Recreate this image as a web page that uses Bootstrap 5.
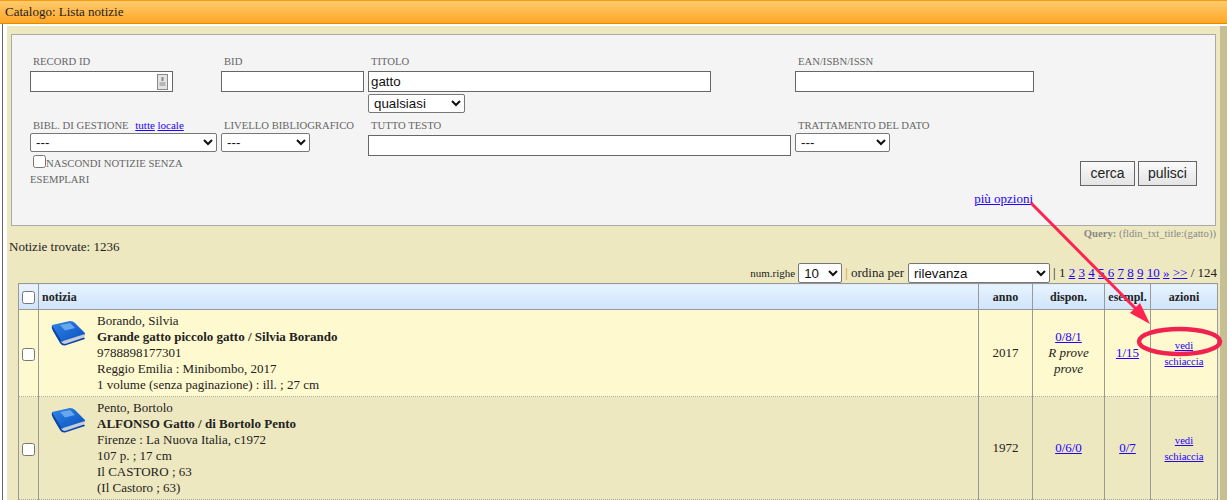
<!DOCTYPE html>
<html lang="it">
<head>
    <meta charset="UTF-8">
    <meta name="viewport" content="width=device-width, initial-scale=1.0">
    <title>Catalogo: Lista notizie</title>
    <link href="https://cdn.jsdelivr.net/npm/bootstrap@5.3.2/dist/css/bootstrap.min.css" rel="stylesheet">
    <style>
        html, body { height: 500px; overflow: hidden; }
        body {
            background: #fff;
            color: #222;
            font-family: "Liberation Serif", serif;
            font-size: 13px;
            line-height: 16px;
        }
        a { color: #2200ff; }
        .top-bar {
            height: 24px;
            padding: 3px 5px;
            font-size: 13px;
            line-height: 16px;
            color: #222;
            background: linear-gradient(#ffca6e, #ffa726);
            border-top: 1px solid #f59a10;
            border-bottom: 1px solid #e08a00;
        }
        .page-frame {
            height: 476px;
            margin-left: 2px;
            border-left: 1px solid #666;
            padding: 2px 0 0 4px;
            background: #fff;
        }
        .beige-area {
            height: 474px;
            padding: 8px 0 0 4px;
            background: #eee8c0;
            border-right: 7px solid #c6bf94;
        }
        .search-panel {
            width: 1205px;
            height: 192px;
            padding: 19px 0 0 18px;
            background: #f4f4f4;
            border: 1px solid #aaa;
            display: grid;
            grid-template-columns: 191px 147px 427px 1fr;
            grid-template-rows: 64px 1fr;
        }
        .fld-label {
            display: block;
            height: 17px;
            padding-left: 3px;
            font-size: 10.67px;
            line-height: 14px;
            color: #666;
            white-space: nowrap;
        }
        .lower-field .fld-label { height: 15px; }
        .fld-label a { font-size: 11px; }
        .fld-label .link-first { margin-left: 4px; }
        .fld-input, .fld-select {
            display: block;
            background: #fff;
            color: #111;
            font-family: "Liberation Sans", sans-serif;
            border-radius: 2px;
        }
        .fld-input {
            height: 21px;
            padding: 0 2px;
            font-size: 13.33px;
            border: 1px solid #666;
            border-radius: 0;
        }
        .fld-select {
            height: 19px;
            padding: 0 0 0 1px;
            font-size: 13.33px;
            border: 1px solid #777;
        }
        .fld-select.sel-big { height: 20px; }
        .w-id { width: 143px; }
        .w-bid { width: 143px; }
        .w-tit { width: 343px; }
        .w-ean { width: 239px; }
        .w-tutto { width: 423px; margin-top: 2px; }
        .s-qual { width: 97px; margin-top: 2px; }
        .s-bibl { width: 187px; }
        .s-liv { width: 89px; }
        .s-trat { width: 95px; }
        .id-wrap { position: relative; width: 143px; }
        .id-icon { position: absolute; right: 2px; top: 3px; }
        .check-line {
            font-size: 10.67px;
            line-height: 16px;
            color: #666;
            width: 180px;
            margin-top: 3px;
        }
        .check-line input { margin: 0 0 0 3px; width: 13px; height: 13px; vertical-align: -1px; }
        .btn-row { width: 402px; margin-top: 9px; gap: 3px; }
        .btn-grey {
            height: 25px;
            padding: 0;
            font-family: "Liberation Sans", sans-serif;
            font-size: 14px;
            color: #222;
            background: linear-gradient(#fafafa, #e4e4e4);
            border: 1px solid #666;
            border-radius: 0;
        }
        .btn-cerca { width: 55px; }
        .btn-pulisci { width: 59px; }
        .more-link { width: 238px; margin-top: 5px; text-align: right; }
        .query-line {
            width: 1205px;
            height: 13px;
            text-align: right;
            font-size: 10.67px;
            line-height: 14px;
            color: #888;
        }
        .found-line { height: 16px; margin: 0 0 0 -2px; line-height: 16px; }
        .pager-line {
            width: 1206px;
            height: 20px;
            margin-top: 8px;
            justify-content: flex-end;
            align-items: center;
            gap: 3px;
            white-space: nowrap;
        }
        .pager-line .num-label { font-size: 11px; }
        .order-label { margin-right: 1px; }
        .sel-righe { width: 44px; }
        .sel-ordina { width: 142px; }
        .orange-sep { color: #d89520; }
        .result-table {
            width: 1199px;
            margin-left: 7px;
            table-layout: fixed;
            border-collapse: collapse;
        }
        .col-check { width: 20px; }
        .col-main { width: 940px; }
        .col-year { width: 54px; }
        .col-disp { width: 72px; }
        .col-esem { width: 46px; }
        .col-act { width: 67px; }
        .result-table th, .result-table td {
            border-left: 1px solid #999;
            border-right: 1px solid #999;
            text-align: center;
            vertical-align: middle;
            padding: 0;
        }
        .result-table thead tr { height: 26px; border-top: 1px solid #999; border-bottom: 1px solid #999; }
        .result-table th {
            font-size: 12px;
            background: linear-gradient(#e8f3ff, #cfe4fb);
        }
        .result-table th.th-notizia { text-align: left; padding-left: 3px; }
        .result-table tbody tr { border-bottom: 1px dotted #a9a9a9; }
        .row-one { height: 87px; background: #fff9cf; }
        .row-two { height: 103px; background: #eee8c0; }
        .result-table .cell-book { text-align: left; vertical-align: top; }
        .book-wrap { gap: 11px; padding: 3px 0 0 12px; line-height: 16px; }
        .book-wrap svg { margin-top: 6px; flex: none; }
        .act-link { font-size: 10.67px; }
        .result-table input { width: 13px; height: 13px; margin: 0; vertical-align: middle; }
        .draw-layer { position: absolute; left: 0; top: 0; pointer-events: none; }
    </style>
</head>
<body>
    <div class="top-bar">Catalogo: Lista notizie</div>
    <div class="page-frame">
        <div class="beige-area">
            <form class="search-panel">
                <div>
                    <label class="fld-label">RECORD ID</label>
                    <div class="id-wrap">
                        <input type="text" class="fld-input w-id">
                        <svg class="id-icon" width="17" height="16" viewBox="0 0 17 16">
                            <rect x="3.5" y="0.5" width="10" height="15" fill="#e4e4e4" stroke="#888"/>
                            <rect x="7.5" y="3" width="2" height="4" fill="#888"/>
                            <rect x="5.5" y="8" width="6" height="4" fill="#b5b5b5"/>
                        </svg>
                    </div>
                </div>
                <div>
                    <label class="fld-label">BID</label>
                    <input type="text" class="fld-input w-bid">
                </div>
                <div>
                    <label class="fld-label">TITOLO</label>
                    <input type="text" class="fld-input w-tit" value="gatto">
                    <select class="fld-select s-qual"><option>qualsiasi</option></select>
                </div>
                <div>
                    <label class="fld-label">EAN/ISBN/ISSN</label>
                    <input type="text" class="fld-input w-ean">
                </div>
                <div class="lower-field">
                    <label class="fld-label">BIBL. DI GESTIONE <a href="#" class="link-first">tutte</a> <a href="#">locale</a></label>
                    <select class="fld-select s-bibl"><option>---</option></select>
                    <div class="check-line"><input type="checkbox">NASCONDI NOTIZIE SENZA ESEMPLARI</div>
                </div>
                <div class="lower-field">
                    <label class="fld-label">LIVELLO BIBLIOGRAFICO</label>
                    <select class="fld-select s-liv"><option>---</option></select>
                </div>
                <div class="lower-field">
                    <label class="fld-label">TUTTO TESTO</label>
                    <input type="text" class="fld-input w-tutto">
                </div>
                <div class="lower-field">
                    <label class="fld-label">TRATTAMENTO DEL DATO</label>
                    <select class="fld-select s-trat"><option>---</option></select>
                    <div class="btn-row d-flex justify-content-end">
                        <button type="button" class="btn btn-grey btn-cerca">cerca</button>
                        <button type="button" class="btn btn-grey btn-pulisci">pulisci</button>
                    </div>
                    <div class="more-link"><a href="#">più opzioni</a></div>
                </div>
            </form>
            <div class="query-line"><b>Query:</b> (fldin_txt_title:(gatto))</div>
            <div class="found-line">Notizie trovate: 1236</div>
            <div class="pager-line d-flex">
                <span class="num-label">num.righe</span>
                <select class="fld-select sel-big sel-righe"><option>10</option></select>
                <span class="order-label"><span class="orange-sep">|</span> ordina per</span>
                <select class="fld-select sel-big sel-ordina"><option>rilevanza</option></select>
                <span>| 1 <a href="#">2</a> <a href="#">3</a> <a href="#">4</a> <a href="#">5</a> <a href="#">6</a> <a href="#">7</a> <a href="#">8</a> <a href="#">9</a> <a href="#">10</a> <a href="#">»</a> <a href="#">&gt;&gt;</a> / 124</span>
            </div>
            <table class="result-table">
                <colgroup>
                    <col class="col-check"><col class="col-main"><col class="col-year"><col class="col-disp"><col class="col-esem"><col class="col-act">
                </colgroup>
                <thead>
                    <tr>
                        <th><input type="checkbox"></th>
                        <th class="th-notizia">notizia</th>
                        <th>anno</th>
                        <th>dispon.</th>
                        <th>esempl.</th>
                        <th>azioni</th>
                    </tr>
                </thead>
                <tbody>
                    <tr class="row-one">
                        <td><input type="checkbox"></td>
                        <td class="cell-book">
                            <div class="book-wrap d-flex">
                                <svg width="35" height="30" viewBox="0 0 35 30"><use href="#book"/></svg>
                                <div>Borando, Silvia<br><b>Grande gatto piccolo gatto / Silvia Borando</b><br>9788898177301<br>Reggio Emilia : Minibombo, 2017<br>1 volume (senza paginazione) : ill. ; 27 cm</div>
                            </div>
                        </td>
                        <td>2017</td>
                        <td><a href="#">0/8/1</a><br><i>R prove<br>prove</i></td>
                        <td><a href="#">1/15</a></td>
                        <td class="act-link"><a href="#">vedi</a><br><a href="#">schiaccia</a></td>
                    </tr>
                    <tr class="row-two">
                        <td><input type="checkbox"></td>
                        <td class="cell-book">
                            <div class="book-wrap d-flex">
                                <svg width="35" height="30" viewBox="0 0 35 30"><use href="#book"/></svg>
                                <div>Pento, Bortolo<br><b>ALFONSO Gatto / di Bortolo Pento</b><br>Firenze : La Nuova Italia, c1972<br>107 p. ; 17 cm<br>Il CASTORO ; 63<br>(Il Castoro ; 63)</div>
                            </div>
                        </td>
                        <td>1972</td>
                        <td><a href="#">0/6/0</a></td>
                        <td><a href="#">0/7</a></td>
                        <td class="act-link"><a href="#">vedi</a><br><a href="#">schiaccia</a></td>
                    </tr>
                </tbody>
            </table>
        </div>
    </div>

    <svg width="0" height="0" class="position-absolute">
        <defs>
            <linearGradient id="coverBlue" x1="0" y1="0" x2="1" y2="1">
                <stop offset="0" stop-color="#2f86e6"/>
                <stop offset="1" stop-color="#0b4fc0"/>
            </linearGradient>
            <g id="book">
                <path d="M1 6 L19 2 Q22 2 24 4 L34 14 L34 16 L12 23 Q10 23 9 21 Z" fill="url(#coverBlue)"/>
                <path d="M12 22 L34 15 L33 19 L13 25.5 Q11 24 12 22 Z" fill="#c5ccd4"/>
                <path d="M1 6 Q0 9 2 12 L9 24 Q11 27 14 26.5 L34 20 L33 18.5 L14 25 Q10 24.5 10 21 Z" fill="#0a45ad"/>
                <path d="M9 6 L19 4 L24 9 L14 11.5 Z" fill="#66a8ee"/>
            </g>
        </defs>
    </svg>

    <svg class="draw-layer" width="1227" height="500" viewBox="0 0 1227 500">
        <line x1="1031" y1="203" x2="1140" y2="313" stroke="#ff2450" stroke-width="3"/>
        <path d="M1150 324 L1130 313 L1140 303 Z" fill="#ff2450"/>
        <ellipse cx="1179.5" cy="341.5" rx="40.5" ry="12.5" fill="none" stroke="#f0224f" stroke-width="4.5"/>
    </svg>
    <script src="https://cdn.jsdelivr.net/npm/bootstrap@5.3.2/dist/js/bootstrap.bundle.min.js"></script>
</body>
</html>
